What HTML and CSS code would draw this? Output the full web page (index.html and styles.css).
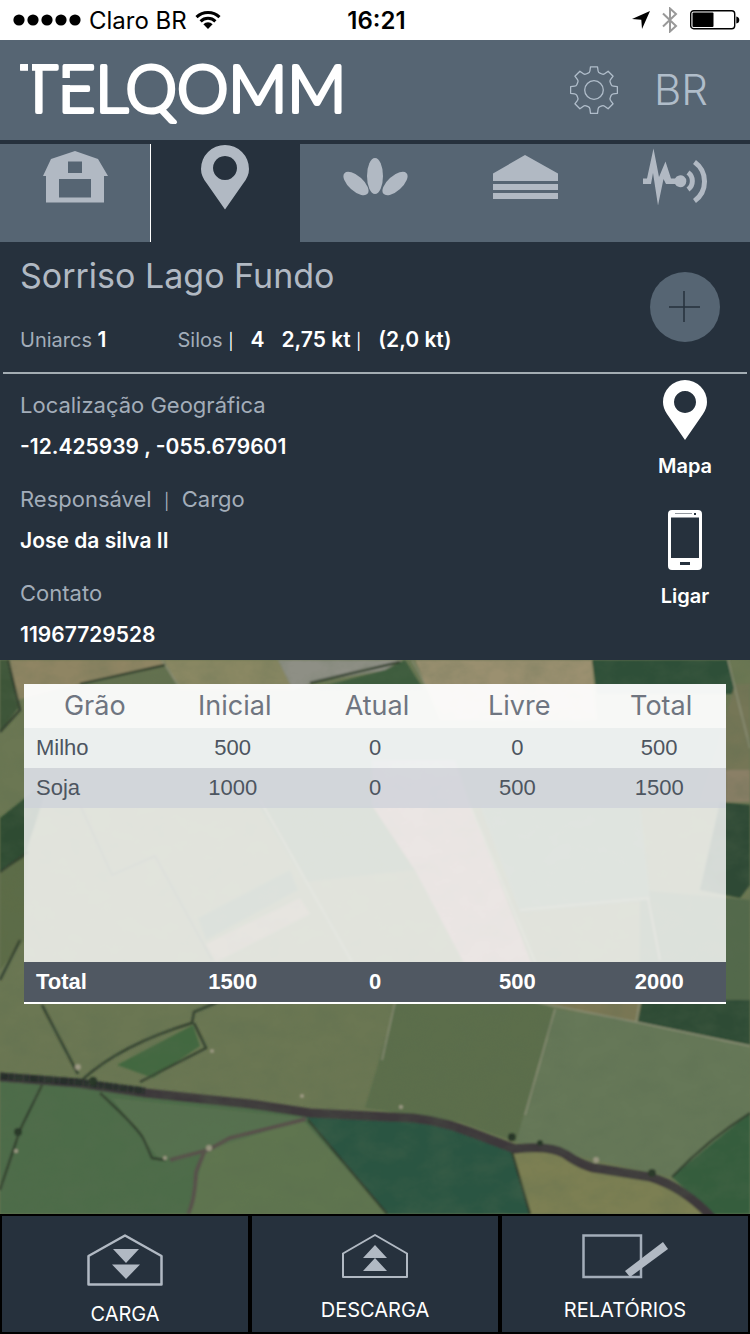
FILE: index.html
```html
<!DOCTYPE html>
<html lang="pt-BR">
<head>
<meta charset="utf-8">
<meta name="viewport" content="width=device-width, initial-scale=1">
<title>Telqomm</title>
<link rel="stylesheet" href="styles.css">
</head>
<body>
<div class="status">
  <div class="status-left">
    <svg width="68" height="12" viewBox="0 0 68 12"><g fill="#000"><circle cx="6" cy="6" r="5.6"/><circle cx="20" cy="6" r="5.6"/><circle cx="34" cy="6" r="5.6"/><circle cx="48" cy="6" r="5.6"/><circle cx="62" cy="6" r="5.6"/></g></svg>
    <span>Claro BR</span>
    <svg width="26" height="18" viewBox="0 0 26 18"><g fill="none" stroke="#000" stroke-width="3"><path d="M1.5 6.2a16.500 16.500 0 0 1 23 0"/><path d="M5.600 10.400a10.500 10.500 0 0 1 14.800 0"/></g><path d="M8.400 13.200a6.500 6.500 0 0 1 9.200 0L13 18z" fill="#000"/></svg>
  </div>
  <time class="clock">16:21</time>
  <div class="status-right">
    <svg width="18" height="18" viewBox="0 0 18 18"><path d="M18 0L10 18 9.300 8.700 0 8z" fill="#000"/></svg>
    <svg width="16" height="26" viewBox="0 0 16 26"><path d="M1 6.500L14 19 8 24.500V1.500L14 7 1 19.500" fill="none" stroke="#999" stroke-width="2"/></svg>
    <svg width="50" height="20" viewBox="0 0 50 20"><rect x=".7" y=".7" width="44" height="18" rx="3" fill="none" stroke="#000" stroke-width="1.400"/><rect x="2.500" y="2.500" width="21" height="14.500" rx="1" fill="#000"/><path d="M46.300 6.500q3 .5 3 3.500t-3 3.500z" fill="#000"/></svg>
  </div>
</div>

<header class="topbar">
  <svg class="logo" width="330" height="80" viewBox="0 -12 330 80" role="img" aria-label="TELQOMM">
    <text class="wordmark" x="0" y="50">TELQOMM</text>
    <g fill="#566573"><path d="M8 0h4v12H8z"/><path d="M40 16h10v7H40z"/></g>
  </svg>
  <div class="topbar-actions">
    <button class="plain" aria-label="Configurações">
      <svg width="48" height="48" viewBox="0 0 48 48" fill="none" stroke="#b0bdca" stroke-width="1.300" stroke-linejoin="round"><circle cx="24" cy="24" r="9.300"/><path d="M20.500 .8h7l.6 4.200q.2 1.600 1.800 2.200l2 .8q1.500 .6 2.700-.3l3.500-2.500 5 5-2.600 3.500q-.9 1.300-.2 2.700l.8 2q.6 1.500 2.200 1.700l4.100 .6v6.600l-4.100 .6q-1.600 .2-2.200 1.700l-.8 2q-.7 1.400 .2 2.700l2.600 3.500-5 5-3.500-2.600q-1.200-.9-2.700-.3l-2 .8q-1.600 .6-1.800 2.200l-.6 4.500h-7l-.6-4.500q-.2-1.600-1.800-2.200l-2-.8q-1.500-.6-2.700 .3l-3.500 2.600-5-5 2.600-3.500q.9-1.300 .2-2.700l-.8-2q-.6-1.500-2.200-1.700l-4.100-.6v-6.600l4.100-.6q1.600-.2 2.200-1.700l.8-2q.7-1.400-.2-2.700l-2.600-3.500 5-5 3.500 2.500q1.200 .9 2.700 .3l2-.8q1.600-.6 1.800-2.200z"/></svg>
    </button>
    <button class="plain lang">BR</button>
  </div>
</header>

<nav class="tabs">
  <button class="tab" aria-label="Fazenda"><svg viewBox="0 0 66 66"><path fill-rule="evenodd" d="M33 7L56 15 66 32H62V58.500H4V32H1L9 15zM26 17.500V29H40V17.500zM17 35V53.500H49V35z"/></svg></button>
  <button class="tab active" aria-label="Localização"><svg viewBox="0 0 66 66"><path fill-rule="evenodd" d="M33 65.500L14.500 39Q9 32 9 25A24 24 0 0 1 57 25Q57 32 51.500 39zM33 12a12 12 0 1 0 .01 0z"/></svg></button>
  <button class="tab" aria-label="Grãos"><svg viewBox="0 0 66 66"><ellipse cx="33" cy="32" rx="8" ry="18"/><ellipse cx="14" cy="39.500" rx="15.500" ry="7.500" transform="rotate(42 14 39.500)"/><ellipse cx="53" cy="39.500" rx="15.500" ry="7.500" transform="rotate(-42 53 39.500)"/></svg></button>
  <button class="tab" aria-label="Silos"><svg viewBox="0 0 66 66"><path d="M33 11L66 29.500V37H1V29.500zM1 40H66V46H1zM1 49H66V55H1z"/></svg></button>
  <button class="tab" aria-label="Sensores"><svg viewBox="0 0 66 66"><path d="M1 34.500H5L11.500 4.500 17 33 23.500 17.500 29 34.500H33A6 6 0 1 1 33 40H24L21.500 35 16 61.500 11 29 9 40H1z"/><g fill="none" stroke="#b1b9c3" stroke-width="5"><path d="M46 28.500a10.500 10.500 0 0 1 0 17"/><path d="M52.500 18a24 24 0 0 1 0 39"/></g></svg></button>
</nav>

<main class="content">
  <section class="summary">
    <div>
      <h1>Sorriso Lago Fundo</h1>
      <p class="meta"><span>Uniarcs <b>1</b></span><span class="silos"><span>Silos <b class="bar">|</b></span><b>4</b><b>2,75 kt <span class="bar">|</span></b><b>(2,0 kt)</b></span></p>
    </div>
    <button class="add" aria-label="Adicionar"><svg width="32" height="32" viewBox="0 0 32 32"><path d="M15 0V31M0 16H31" stroke="#26313d" stroke-width="1.500"/></svg></button>
  </section>
  <section class="details">
    <dl>
      <div><dt>Localização Geográfica</dt><dd>-12.425939 , -055.679601</dd></div>
      <div><dt>Responsável &nbsp;<span class="bar">|</span>&nbsp; Cargo</dt><dd>Jose da silva II</dd></div>
      <div><dt>Contato</dt><dd>11967729528</dd></div>
    </dl>
    <div class="actions">
      <button class="action"><svg width="46" height="60" viewBox="0 0 46 60"><path fill="#fff" fill-rule="evenodd" d="M23 60L5 34Q1 28 1 22A22 22 0 0 1 45 22Q45 28 41 34zM23 11a11 11 0 1 0 .01 0z"/></svg>Mapa</button>
      <button class="action"><svg width="34" height="60" viewBox="0 0 34 60"><path fill="#fff" fill-rule="evenodd" d="M4 0H30Q34 0 34 4V56Q34 60 30 60H4Q0 60 0 56V4Q0 0 4 0zM3 7.500V48H31V7.500zM12 52V55H22V52zM26 3V5H28V3zM7 3.500V4H24V3.500z"/></svg>Ligar</button>
    </div>
  </section>
</main>

<section class="map">
  <svg class="fields" viewBox="0 0 750 554" preserveAspectRatio="xMidYMid slice" aria-hidden="true">
    <defs>
      <filter id="grain" x="0" y="0" width="100%" height="100%"><feTurbulence type="fractalNoise" baseFrequency=".035 .05" numOctaves="4" seed="4"/><feColorMatrix values="0 0 0 0 .1  0 0 0 0 .15  0 0 0 0 .08  .9 0 0 0 -.3"/></filter>
      <filter id="soft"><feGaussianBlur stdDeviation=".8"/></filter>
    </defs>
    <rect width="750" height="554" fill="#6b7753"/>
    <g filter="url(#soft)">
      <path fill="#3c5438" d="M0 0H9L18 48 0 72z"/>
      <path fill="#8f8563" d="M10 0H160L166 5 80 24 17 40z"/>
      <path fill="#64714f" d="M166 5L178 30H60L80 24z"/>
      <path fill="#8a8863" d="M164 0H278L293 30H180z"/>
      <path fill="#8e8f85" d="M278 0H402L385 10 315 22 293 30z"/>
      <path fill="#3c5b3d" d="M405 0L424 30H308L385 10z"/>
      <path fill="#9b9070" d="M415 0H592L597 60H440z"/>
      <path fill="#2f4f37" d="M592 0H729L735 34H597z"/>
      <path fill="#747657" d="M735 24H750V142H700z"/>
      <path fill="#8a7f66" d="M726 110H750V142H726z"/>
      <path fill="#2d4935" d="M720 142L750 145V225L740 238 700 230z"/>
      <path fill="#52694b" d="M640 230L750 240V344H640z"/>
      <path fill="#2f4c31" d="M0 158L50 118 24 198 0 212z"/>
      <path fill="#5d6c47" d="M0 212L28 195 24 280 0 310z"/>
      <path fill="#59704f" d="M258 145L372 145 415 210 305 222z"/>
      <path fill="#647a63" d="M480 145H640L650 240 520 252z"/>
      <path fill="#9b8078" d="M372 145L372 100H455L470 145 532 305H465L415 210z"/>
      <path fill="#526c52" d="M198 258L290 210 298 230 206 280z"/>
      <path fill="#877d65" d="M206 284L300 238 310 254 216 302z"/>
      <path fill="#7d7855" d="M530 340H642L637 362z"/>
      <path fill="#2d4b35" d="M642 340H750V385L638 362z"/>
      <path fill="#5b6e4b" d="M397 340H532L555 349 516 482 460 462 365 448z"/>
      <path fill="#667858" d="M555 349L638 362 750 385V455L672 517 516 482z"/>
      <path fill="#42683f" d="M117 405L193 365 200 386 153 418z"/>
      <path fill="#4d6c4a" d="M0 418L145 435 310 454 387 554H0z"/>
      <path fill="#56714f" d="M112 438L305 458 206 490 160 500 144 480z"/>
      <path fill="#5e7550" d="M303 460L387 554H188L205 490z"/>
      <path fill="#2b5543" d="M305 456L430 459 470 470 512 492 520 510 530 554H387L350 510z"/>
      <path fill="#7b7f52" d="M512 490L545 488 590 510 640 514 670 525 710 554H530z"/>
      <path fill="#345d3d" d="M750 453Q718 478 672 517L712 554H750z"/>
      <g fill="none" stroke="#8c8f76" stroke-width="1.500">
        <path d="M162 0L180 28M412 0L428 30M728 0L750 88M260 140L352 302M470 145L535 302M520 250L648 238 660 300M535 342L636 362 750 386M555 349L525 455M636 362L640 340M395 342L382 400"/>
      </g>
      <g fill="none" stroke="#33402f" stroke-width="2.500">
        <path d="M8 0L20 50 0 72M80 24L165 5M310 23L400 2M42 345L78 414M82 420Q120 385 192 363L194 352 218 342M194 363L206 388 140 422M42 425L20 470 0 530M100 433Q140 470 144 480L152 498 165 500M308 460L387 554M512 492L530 554M672 517Q710 478 750 453M0 212L28 192M20 280L0 320"/>
      </g>
      <path d="M80 145L112 215 155 196 212 300" fill="none" stroke="#55614c" stroke-width="2"/>
      <path d="M306 459L230 478 208 490 170 500M205 490L196 512Q195 540 188 554" fill="none" stroke="#58514c" stroke-width="4"/>
      <path d="M0 417L77 423 145 433 250 444 310 453 390 457Q430 456 470 472L515 489Q550 485 565 494 585 508 600 509L650 517Q685 528 712 558" fill="none" stroke="#3d373b" stroke-width="9"/>
      <path d="M0 416L77 422 145 431" fill="none" stroke="#252f2a" stroke-width="7" stroke-dasharray="8 1 5 1"/>
      <g fill="#a09b86"><circle cx="209" cy="488" r="3"/><circle cx="212" cy="391" r="2"/><circle cx="78" cy="407" r="3"/><circle cx="302" cy="436" r="2"/><circle cx="401" cy="447" r="2"/><circle cx="596" cy="500" r="3"/><circle cx="165" cy="498" r="2"/><circle cx="16" cy="491" r="2"/></g>
      <g fill="#263628"><circle cx="512" cy="477" r="4"/><circle cx="540" cy="483" r="3"/><circle cx="652" cy="513" r="4"/><circle cx="93" cy="421" r="4"/><circle cx="18" cy="472" r="4"/></g>
    </g>
    <rect width="750" height="554" filter="url(#grain)" opacity=".5"/>
  </svg>
  <table class="grains">
    <colgroup><col class="col-name"><col><col><col><col class="col-total"></colgroup>
    <thead><tr><th scope="col">Grão</th><th scope="col">Inicial</th><th scope="col">Atual</th><th scope="col">Livre</th><th scope="col">Total</th></tr></thead>
    <tbody>
      <tr class="row-light"><th scope="row">Milho</th><td>500</td><td>0</td><td>0</td><td>500</td></tr>
      <tr class="row-dark"><th scope="row">Soja</th><td>1000</td><td>0</td><td>500</td><td>1500</td></tr>
      <tr class="row-empty"><td colspan="5"></td></tr>
    </tbody>
    <tfoot><tr><th scope="row">Total</th><td>1500</td><td>0</td><td>500</td><td>2000</td></tr></tfoot>
  </table>
</section>

<nav class="bottom">
  <button class="command"><svg width="76" height="52" viewBox="0 0 76 52"><path d="M1.500 22L38 1.500 74.500 22V50.500H1.500z" fill="none" stroke="#b1b9c3" stroke-width="2.500" stroke-linejoin="round"/><path d="M26 15H52L39 29zM25 30.500H53L39 45z" fill="#b1b9c3"/></svg>CARGA</button>
  <button class="command"><svg width="66" height="48" viewBox="0 0 66 48"><path d="M1 19.500L33 1 65 19.500V43H1z" fill="none" stroke="#b1b9c3" stroke-width="2" stroke-linejoin="round"/><path d="M33 11L45 24H21zM33 24L45 37H21z" fill="#b1b9c3"/></svg>DESCARGA</button>
  <button class="command"><svg width="86" height="48" viewBox="0 0 86 48"><path d="M1.500 1.500H59V43H1.500z" fill="none" stroke="#a3adb9" stroke-width="2.500"/><path d="M81 8L86 15 48 43 43 37z" fill="#b1b9c3"/></svg>RELATÓRIOS</button>
</nav>
</body>
</html>
```
FILE: styles.css
```css
* { box-sizing: border-box; }

body {
  margin: 0;
  min-height: 100vh;
  display: flex;
  flex-direction: column;
  background: #26313d;
  color: #fff;
  font-family: Inter, "Noto Sans", sans-serif;
}

button {
  margin: 0;
  padding: 0;
  border: 0;
  background: none;
  color: inherit;
  font: inherit;
}

svg { display: block; }

.status {
  display: grid;
  grid-template-columns: 1fr auto 1fr;
  align-items: center;
  height: 40px;
  padding: 0 10px 0 13px;
  background: #fff;
  color: #000;
  font-size: 24px;
}
.status-left, .status-right { display: flex; align-items: center; }
.status-left { gap: 8px; }
.status-right { gap: 12px; justify-content: flex-end; }
.clock { font-weight: 600; }

.topbar {
  display: flex;
  align-items: center;
  justify-content: space-between;
  height: 100px;
  padding: 0 42px 0 20px;
  background: #566573;
}
.wordmark {
  font-family: Lato, sans-serif;
  font-size: 65px;
  font-weight: 300;
  fill: #fff;
  stroke: #fff;
  stroke-width: 4px;
  stroke-linejoin: round;
}
.topbar-actions { display: flex; align-items: center; gap: 36px; }
.lang { color: #b0bdca; font-size: 42px; font-weight: 300; line-height: 48px; }

.tabs {
  display: grid;
  grid-template-columns: repeat(5, 1fr);
  margin-top: 4px;
}
.tab {
  display: flex;
  justify-content: center;
  align-items: flex-start;
  height: 98px;
  background: #566573;
}
.tab svg { width: 66px; height: 66px; fill: #b1b9c3; }
.tab.active { background: #26313d; box-shadow: inset 1px 0 #fff; }

.summary {
  display: flex;
  align-items: center;
  justify-content: space-between;
  margin: 0 3px;
  padding: 14px 27px 20px 17px;
  border-bottom: 2px solid #a3adb3;
}
h1 {
  margin: 0 0 32px;
  color: #b1b9c3;
  font-size: 34px;
  font-weight: 400;
  line-height: 40px;
}
.meta {
  display: flex;
  gap: 71px;
  margin: 0;
  height: 24px;
  color: #a3adb9;
  font-size: 20px;
  line-height: 24px;
  white-space: nowrap;
}
.meta b { color: #fff; font-size: 21px; font-weight: 600; }
.bar, .meta .bar { font-size: 16px; font-weight: 400; line-height: 16px; }
.silos { display: flex; gap: 17px; align-items: baseline; }
.add {
  display: grid;
  place-items: center;
  width: 70px;
  height: 70px;
  margin-top: 6px;
  border-radius: 50%;
  background: #566573;
}

.details {
  display: flex;
  justify-content: space-between;
  padding: 0 30px 0 20px;
}
dl {
  display: flex;
  flex-direction: column;
  gap: 28px;
  margin: 0;
  padding: 19px 0 13px;
  line-height: 24px;
}
dt { margin-bottom: 18px; color: #a3adb9; font-size: 22px; }
dd { margin: 0; font-size: 21px; font-weight: 600; }
.actions {
  display: flex;
  flex-direction: column;
  gap: 32px;
  width: 70px;
  padding-top: 6px;
}
.action {
  display: flex;
  flex-direction: column;
  align-items: center;
  gap: 14px;
  font-size: 20px;
  font-weight: 600;
  line-height: 24px;
}

.map { position: relative; flex: 1; padding: 24px; }
.fields { position: absolute; inset: 0; width: 100%; height: 100%; }

.grains {
  position: relative;
  width: 100%;
  table-layout: fixed;
  border-collapse: separate;
  border-spacing: 0;
  border-bottom: 2px solid #fff;
  color: #4d5560;
  font-family: "Liberation Sans", Arial, sans-serif;
  font-size: 22px;
  line-height: 24px;
}
.col-name, .col-total { width: 19.6%; }
.grains th, .grains td { height: 40px; padding: 0; font-weight: 400; text-align: center; }
.grains td:last-child { padding-left: 4px; }
.grains thead th {
  height: 44px;
  padding-left: 4px;
  color: #6f7580;
  font-family: Inter, "Noto Sans", sans-serif;
  font-size: 27px;
}
.grains thead th:last-child { padding-left: 8px; }
.grains tbody th, .grains tfoot th { padding-left: 12px; text-align: left; }
.grains thead { background: rgba(255, 255, 255, .95); }
.row-light { background: rgba(242, 245, 247, .95); }
.row-dark { background: rgba(216, 219, 225, .95); }
.row-empty { background: rgba(255, 255, 255, .8); }
.grains .row-empty td { height: 154px; }
.grains tfoot { background: #505862; color: #fff; }
.grains tfoot th, .grains tfoot td { font-weight: 700; }

.bottom {
  display: grid;
  grid-template-columns: repeat(3, 1fr);
  background: #000;
}
.command {
  display: flex;
  flex-direction: column;
  align-items: center;
  gap: 16px;
  height: 120px;
  padding-top: 18px;
  border: 2px solid #000;
  background: #26313d;
  font-size: 20px;
  line-height: 24px;
}
```
